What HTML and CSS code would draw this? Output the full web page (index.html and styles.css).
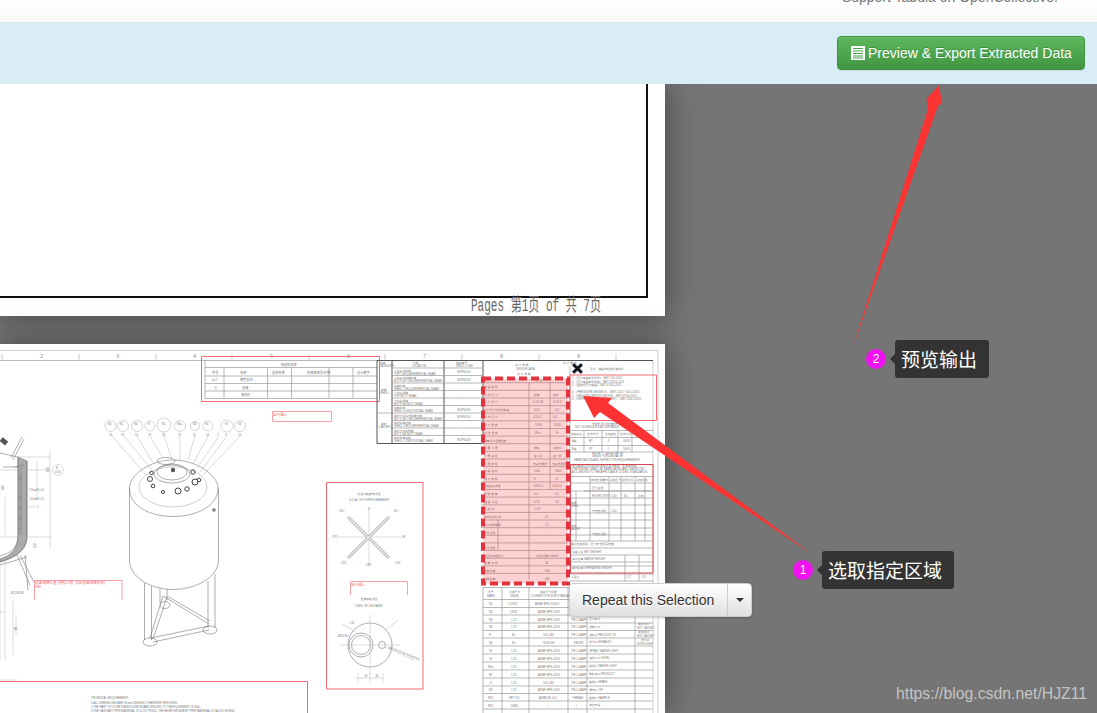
FILE: index.html
```html
<!DOCTYPE html>
<html lang="zh">
<head>
<meta charset="utf-8">
<title>Tabula</title>
<link rel="stylesheet" href="styles.css">
</head>
<body>
<div class="app">
  <nav class="nav"><span class="nav-note">Support Tabula on OpenCollective.</span></nav>
  <div class="bar">
    <button class="btn-export">
      <svg class="icon-list" viewBox="0 0 14 14"><path class="il-box" d="M0 0H14V14H0Z"/><path class="il-lines" d="M2 2.500H12M2 5H12M2 7.500H12M2 10H12M2 12H12"/></svg>
      <span>Preview &amp; Export Extracted Data</span>
    </button>
  </div>
  <main class="work">
    <section class="page page-one">
      <svg class="sheet" viewBox="0 84 665 232">
        <path class="frame-black" d="M647 84V297H-5"/>
        <text class="pages" x="471" y="311" textLength="130" lengthAdjust="spacingAndGlyphs">Pages 第1页 of 共 7页</text>
      </svg>
    </section>
    <section class="page page-two">
      <svg class="sheet" viewBox="0 344 665 369">
        <defs>
          <pattern id="hatch" width="2" height="2" patternUnits="userSpaceOnUse"><path class="hatch-line" d="M0 2L2 0M0 0L2 2"/></pattern>
        </defs>
        <!-- sheet frame -->
        <path class="lt" d="M0 350.500H658V713"/>
        <path class="md" d="M0 360.500H483"/>
        <path class="lt" d="M653 360V713M2 354V360M79 354V360M156 354V360M232 354V360M309 354V360M385 354V360M462 354V360M539 354V360M616 354V360"/>
        <g class="tx tx-num">
          <text x="40" y="358">2</text><text x="116" y="358">3</text><text x="193" y="358">4</text><text x="270" y="358">5</text><text x="347" y="358">6</text><text x="423" y="358">7</text><text x="500" y="358">8</text><text x="577" y="358">9</text>
        </g>
        <!-- top middle table -->
        <path class="md" d="M205 360.500V398.500H377M205 367.500H377M205 376H377M205 383.500H377M205 391H377M224 367.500V398.500M267.500 367.500V398.500M291.500 367.500V398.500M329 367.500V398.500M353 367.500V398.500"/>
        <g class="tx">
          <text x="281" y="366">特定检测表</text>
          <text x="212" y="373.500">序号</text><text x="240" y="373.500">名称</text><text x="272" y="373.500">是否开放</text><text x="307" y="373.500">检查单编号/日期</text><text x="357" y="373.500">设计签字</text>
          <text x="212" y="381">φ-2</text><text x="240" y="381">钢管支柱</text><text x="214" y="388.500">Ⅱ</text><text x="242" y="388.500">连接</text><text x="241" y="396">接地孔</text>
        </g>
        <path class="rd" d="M201.500 356.500H379.500V401.500H201.500Z"/>
        <path class="rd-soft" d="M272.500 411.500H331.500V421.500H272.500Z"/>
        <text class="tx-red" x="273" y="416">自行插入</text>
        <!-- weld table -->
        <path class="dk" d="M377 360.500H483V443.500H377ZM392 360.500V443.500M444 360.500V443.500"/>
        <path class="md" d="M392 368H483M392 375.500H483M392 383H483M392 390.500H483M392 398H483M392 405.500H483M392 413H483M392 420.500H483M392 428H483M392 435.500H483M377 413H392"/>
        <g class="tx tx-sm">
          <text x="380" y="364">焊条</text><text x="379" y="367">CATEGORY</text><text x="413" y="364">位置</text><text x="412" y="367">LOCATION</text><text x="456" y="364">焊接编号</text><text x="456" y="367">WELD CODE</text>
          <text x="394" y="371.500">上封头与筒体</text><text x="394" y="374.500">TOP CIRCUMFERENTIAL SEAM</text>
          <text x="394" y="379">下封头与筒体环缝</text><text x="394" y="382">BOTTOM CIRCUMFERENTIAL SEAM</text>
          <text x="394" y="386.500">筒体环缝</text><text x="394" y="389.500">SHELL CIRCUMFERENTIAL SEAM</text>
          <text x="394" y="394">上封头拼缝</text><text x="394" y="397">TOP BUTT SEAM</text>
          <text x="394" y="401.500">下封头拼缝</text><text x="394" y="404.500">BOTTOM BUTT SEAM</text>
          <text x="394" y="409">筒体纵缝</text><text x="394" y="412">SHELL LONGITUDINAL SEAM</text>
          <text x="394" y="416.500">夹套下封头与筒体环缝</text><text x="394" y="419.500">BOTTOM CIRCUMFERENTIAL SEAM</text>
          <text x="394" y="424">夹套筒体环缝</text><text x="394" y="427">SHELL CIRCUMFERENTIAL SEAM</text>
          <text x="394" y="431.500">夹套下封头拼缝</text><text x="394" y="434.500">BOTTOM BUTT SEAM</text>
          <text x="394" y="439">夹套筒体纵缝</text><text x="394" y="442">SHELL LONGITUDINAL SEAM</text>
          <text x="381" y="391">本体</text><text x="380" y="394">SHELL</text><text x="381" y="425">夹套</text><text x="379" y="428">(JACKET)</text>
          <text x="457" y="373">WDP001G</text><text x="457" y="380.500">WDP001G</text><text x="462" y="388">-</text><text x="462" y="395.500">-</text><text x="457" y="410.500">WDP001G</text><text x="457" y="418">WDP001G</text><text x="462" y="425.500">-</text><text x="462" y="433">-</text><text x="457" y="440.500">WDP002G</text>
        </g>
        <!-- right top -->
        <path class="dk" d="M483 360.500H653"/>
        <path class="md" d="M570 366V574"/>
        <g class="tx tx-sm">
          <text x="515" y="366">设 计 参 数</text>
          <text x="516" y="370">DESIGN DATA</text><text x="517" y="374.500">设 计 参 数</text>
          <text x="563" y="364">设 计 要 求</text>
          <text x="590" y="370">压力、容器与检验标准规范</text>
          <text x="572" y="379">1.《压力容器安全技术》 GB/T 150-2011</text>
          <text x="572" y="382.500">2.《压力容器制造规程》 NBT 47014-2011</text>
          <text x="572" y="386">3.《固定式压力容器》 NBT 47015-2011</text>
          <text x="572" y="393">4.《PRESSURE VESSELS》 GB/T 150.1~150.4-2011</text>
          <text x="572" y="396.500">5.《WELDING SPECIFICATION》 NBT 47014-2011</text>
          <text x="572" y="400">6.《INSPECTION OF EQUIPMENT》 NBT 47013-2015</text>
          <text x="592" y="425">无损检测比例与要求</text>
          <text x="575" y="428">NDT SCHEDULE &amp; ACCEPTANCE</text>
          <text x="592" y="456" class="tx-big">制造与检验要求</text>
          <text x="574" y="460.500">FABRICATION AND INSPECTION REQUIREMENTS</text>
          <text x="572" y="467">本设备按图纸及相关标准规范进行制造、检验和验收。</text>
          <text x="572" y="470">THE VESSEL SHALL BE FABRICATED AND INSPECTED</text>
          <text x="572" y="473">ACCORDING TO THE APPLICABLE CODES, STANDARDS.</text>
        </g>
        <path class="md" d="M570 430.500H653M570 437.500H653M570 445.500H653M570 452H653M584 430.500V452M602 430.500V452M618 430.500V452M632 430.500V452"/>
        <g class="tx tx-sm">
          <text x="571" y="435">焊接接头</text><text x="587" y="435">检测方法</text><text x="605" y="435">合格级别</text><text x="620" y="435">检测比例</text>
          <text x="572" y="442">A类</text><text x="589" y="442">RT</text><text x="607" y="442">Ⅱ</text><text x="623" y="442">100%</text>
          <text x="572" y="449.500">B类</text><text x="589" y="449.500">PT</text><text x="607" y="449.500">Ⅰ</text><text x="623" y="449.500">100%</text>
        </g>
        <path class="md" d="M570 476.500H653M570 483H653M570 491H653M570 498H653M584 491H653M570 505H653M570 513H653M570 520H653M570 528H653M570 535H653M570 541H653M570 548H653M570 555H653M570 562H653M570 566H653M570 574H653M570 581H653M590 476.500V541M576 491V541M609 476.500V541M621 476.500V541M635 476.500V541M645 476.500V541M625 555V581M639 555V581"/>
        <g class="tx tx-sm">
          <text x="591" y="481">制造检验要求</text><text x="610" y="481">试验压力</text><text x="622" y="481">保压时间</text><text x="636" y="481">合格标准</text>
          <text x="571" y="504">本体</text><text x="570" y="507">SHELL</text><text x="571" y="527">夹套</text><text x="570" y="530">JACKET</text>
          <text x="592" y="489">压力试验</text><text x="592" y="497">HYDRO TEST</text><text x="611" y="497">1.00</text><text x="624" y="497">30</text><text x="638" y="497">合格</text>
          <text x="592" y="512">气密性试验</text><text x="611" y="512">1.00</text><text x="592" y="535">气密性试验</text>
          <text x="571" y="545">其它检验项目：压力表·安全阀检查</text>
          <text x="572" y="553">设备净重 NET WEIGHT</text><text x="572" y="560">满水重量 WATER WEIGHT</text><text x="572" y="569">操作重量 OPERATING WEIGHT</text>
          <text x="571" y="578">净重比</text><text x="627" y="578">1.2</text><text x="642" y="578">6.5</text>
        </g>
        <path class="rd" d="M570 375H656.500V420.500H570Z"/>
        <path class="rd-strong" d="M570.500 464.500H653V573H570.500Z"/>
        <!-- selected table lines under overlay -->
        <path class="md" d="M481 382.700H570M481 390.300H570M481 398H570M481 405.600H570M481 413.200H570M481 420.900H570M481 428.500H570M481 436.100H570M481 443.700H570M481 451.400H570M481 459H570M481 466.600H570M481 474.300H570M481 481.900H570M481 489.500H570M481 497.100H570M481 504.800H570M481 512.400H570M481 520H570M481 527.700H570M481 535.300H570M481 542.900H570M481 550.500H570M481 558.200H570M481 565.800H570M481 573.400H570M529 382V580M550 382V490M498 520V550"/>
        <g class="tx tx-sm">
          <text x="536" y="382">介 质</text><text x="484" y="388">容 器 类 别</text><text x="484" y="396">工 作 压 力</text><text x="484" y="403">设 计 压 力</text><text x="484" y="411">设计压力及危险等级</text><text x="484" y="418">工 作 压 力</text><text x="484" y="426">设 计 温 度</text><text x="484" y="434">工 作 温 度</text><text x="484" y="441.500">最高设计金属温度</text><text x="484" y="449">主 要 介 质</text><text x="484" y="457">介 质 类 别</text><text x="484" y="465">介 质 特 性</text><text x="484" y="472">容 器 容 积</text><text x="484" y="480">设 计 寿 命</text><text x="484" y="487">焊接接头系数</text><text x="484" y="495">腐 蚀 裕 量</text><text x="484" y="503">容 器 净 重</text><text x="484" y="510">全 容 积</text><text x="484" y="518">射线检测比例</text><text x="484" y="526">设计使用年限</text><text x="484" y="534">耐压试验</text><text x="484" y="549">水压试验</text><text x="484" y="557">安全阀开启压力</text><text x="484" y="564">最 高 许 用</text><text x="484" y="572">空载重量</text><text x="484" y="580">满载重量</text>
          <text x="534" y="396">筒体</text><text x="553" y="396">夹套</text><text x="532" y="403">-0.1/0.28</text><text x="552" y="403">-0.1/0.3</text><text x="534" y="411">0.25</text><text x="555" y="411">0.3</text><text x="532" y="418">-0.1/0.2</text><text x="553" y="418">0.4</text><text x="534" y="426">-5/150</text><text x="553" y="426">-5/150</text><text x="535" y="434">85℃</text><text x="555" y="434">7℃</text><text x="534" y="449">物料</text><text x="553" y="449">冷却水</text><text x="534" y="457">第二组</text><text x="553" y="457">第一组</text><text x="533" y="465">无毒无易燃</text><text x="552" y="465">无毒无易燃</text><text x="534" y="472">1000</text><text x="555" y="472">1000</text><text x="534" y="480">8</text><text x="556" y="480">8</text><text x="533" y="487">0.85/1.0</text><text x="552" y="487">0.85/1.0</text><text x="534" y="495">0.4</text><text x="555" y="495">0.1</text><text x="534" y="503">0.76</text><text x="555" y="503">1.0</text><text x="535" y="510">0.25</text><text x="545" y="518">10</text><text x="545" y="526">2.1</text><text x="545" y="534">-</text><text x="538" y="549">-</text><text x="536" y="557">低压水循环 30min</text><text x="545" y="564">30</text><text x="545" y="572">900</text><text x="545" y="580">435</text>
        </g>
        <rect class="selection" x="483" y="378.500" width="85" height="205"/>
        <!-- nozzle table -->
        <path class="md" d="M483 587.500H653M483 599.500H653M483 607.500H653M483 615H653M483 623H653M483 630.500H653M483 638H653M483 646H653M483 654H653M483 662H653M483 670H653M483 678H653M483 686H653M483 693.500H653M483 701H653M483 709H653M483 587.500V713M502 587.500V713M529 587.500V713M568 587.500V713M587 587.500V713M635 587.500V713"/>
        <g class="tx tx-sm">
          <text x="488" y="593">序号</text><text x="487" y="596.500">MARK</text><text x="509" y="593">公称尺寸</text><text x="510" y="596.500">DN(IN)</text><text x="540" y="593">连接尺寸标准</text><text x="531" y="596.500">CONNECTION SIZE STANDARD</text>
          <text x="489" y="605">N1</text><text x="508" y="605">1.25/65</text><text x="535" y="605">ASME BPE-2019/Ti</text>
          <text x="489" y="612.500">N2</text><text x="510" y="612.500">13/26</text><text x="538" y="612.500">ASME BPE-2019</text>
          <text x="489" y="620.500">N3</text><text x="511" y="620.500">1.25</text><text x="538" y="620.500">ASME BPE-2019</text><text x="571" y="620.500">TRI-CLAMP</text>
          <text x="489" y="628">N5</text><text x="511" y="628">1.25</text><text x="538" y="628">ASME BPE-2019</text><text x="571" y="628">TRI-CLAMP</text>
          <text x="489" y="635.500">E</text><text x="512" y="635.500">65</text><text x="543" y="635.500">150 LBS</text><text x="571" y="635.500">TRI-CLAMP</text>
          <text x="489" y="643.500">N2</text><text x="512" y="643.500">90</text><text x="543" y="643.500">SCH 10S</text><text x="574" y="643.500">FRONT</text>
          <text x="489" y="651.500">S1</text><text x="511" y="651.500">1.25</text><text x="538" y="651.500">ASME BPE-2019</text><text x="571" y="651.500">TRI-CLAMP</text>
          <text x="489" y="659.500">S2</text><text x="511" y="659.500">1.25</text><text x="538" y="659.500">ASME BPE-2019</text><text x="571" y="659.500">TRI-CLAMP</text>
          <text x="488" y="667.500">N3a</text><text x="511" y="667.500">2.25</text><text x="538" y="667.500">ASME BPE-2019</text><text x="571" y="667.500">TRI-CLAMP</text>
          <text x="489" y="675.500">H7</text><text x="511" y="675.500">1.25</text><text x="538" y="675.500">ASME BPE-2019</text><text x="571" y="675.500">TRI-CLAMP</text>
          <text x="489" y="683.500">J1</text><text x="511" y="683.500">1.25</text><text x="543" y="683.500">150 LBS</text><text x="571" y="683.500">TRI-CLAMP</text>
          <text x="489" y="691">N2</text><text x="511" y="691">1.25</text><text x="538" y="691">ASME BPE-2019</text><text x="571" y="691">TRI-CLAMP</text>
          <text x="488" y="698.500">R10</text><text x="509" y="698.500">NPT 1/2</text><text x="539" y="698.500">ASME B1.20.1</text><text x="572" y="698.500">THREAD</text>
          <text x="488" y="706.500">R16</text><text x="511" y="706.500">DN65</text><text x="547" y="706.500">/</text><text x="576" y="706.500">/</text>
          <text x="589" y="620">压力表口</text><text x="589" y="628">温度计口</text><text x="589" y="635.500">进料口 PRODUCT IN</text><text x="589" y="643">排气口 EXHAUST</text><text x="589" y="651.500">SPRAY, WATER LIGHT</text><text x="589" y="659">液位计口 LEVEL</text><text x="589" y="667">视镜灯 WATER LIGHT</text><text x="589" y="675">物料进口 PRODUCT</text><text x="589" y="683">备用口 SPARE</text><text x="589" y="691">清洗口 CIP</text><text x="589" y="698.500">取样口 SAMPLE</text><text x="589" y="706">液位开关</text>
          <text x="638" y="625">夹套出口</text><text x="637" y="628.500">HOT JACKET</text><text x="638" y="633">夹套进口</text><text x="637" y="636.500">HOT JACKET</text><text x="641" y="641">排污口</text><text x="637" y="644.500">WITH LIGHT</text>
        </g>
        <!-- tank -->
        <path class="dr" d="M129.500 488C129.500 475 150 460 173 460C196 460 218 475 218 488C218 507 195 516.500 173 516.500C151 516.500 129.500 507 129.500 488ZM129.500 488V560C129.500 577 150 589.500 173 589.500C196 589.500 218.500 577 218.500 560V488"/>
        <ellipse class="lt" cx="173" cy="487" rx="34" ry="20"/>
        <ellipse class="dr" cx="166" cy="461" rx="9" ry="3.500"/>
        <ellipse class="dr" cx="172" cy="472" rx="15" ry="8"/>
        <ellipse class="dr" cx="172" cy="474" rx="18" ry="9"/>
        <circle class="dk-fill" cx="173" cy="470" r="2.200"/>
        <g class="nozzles">
          <circle cx="151.500" cy="473" r="1.800"/><circle cx="150" cy="479" r="2.500"/><circle cx="153" cy="486" r="1.800"/><circle cx="163" cy="492" r="1.600"/><circle cx="178" cy="491" r="3"/><circle cx="187" cy="489" r="2.200"/><circle cx="195" cy="482" r="3"/><circle cx="193" cy="472" r="2.200"/><circle cx="199" cy="480" r="1.800"/><circle cx="214" cy="510" r="1.200"/>
        </g>
        <path class="lt-dr" d="M112 436L146 475M124 436L152 470M137 436L153 463M150 436L163 458M164 436L172 459M180 436L180 460M195 436L188 460M208 436L193 464M219 436L197 468M227 436L200 472M240 436L204 474"/>
        <g class="balloons">
          <circle cx="110.500" cy="426" r="5.500"/><circle cx="123" cy="426" r="5.500"/><circle cx="137" cy="426" r="5.500"/><circle cx="150" cy="426" r="5"/><circle cx="164" cy="425" r="7"/><circle cx="180" cy="426" r="5.500"/><circle cx="195" cy="426" r="4.500"/><circle cx="208" cy="426" r="5"/><circle cx="227" cy="426" r="6"/><circle cx="240" cy="426" r="5.500"/>
        </g>
        <g class="tx tx-sm">
          <text x="108" y="425">N1</text><text x="120" y="425">K1</text><text x="134" y="425">N4</text><text x="148" y="425">E</text><text x="162" y="425">K1</text><text x="177" y="425">K6a</text><text x="193" y="425">N2</text><text x="205" y="425">K4</text><text x="225" y="425">K7</text><text x="238" y="425">K3</text>
          <text x="109" y="436">13</text><text x="121" y="436">18</text><text x="135" y="436">10</text><text x="148" y="436">13</text><text x="162" y="436">19</text><text x="178" y="436">17</text><text x="193" y="436">11</text><text x="206" y="436">16</text><text x="217" y="436">7</text><text x="225" y="436">9</text><text x="238" y="436">13</text>
        </g>
        <!-- legs -->
        <path class="dr" d="M144.500 583V640M151.500 586V640M208 581V628M215 574V628M160 589V603M167 589V600M163 596L209 624M167 596L210 621M163 596L150 638M167 597L153 639M151 638L209 626M153 642L209 630"/>
        <ellipse class="dr" cx="150" cy="642" rx="7" ry="4"/>
        <ellipse class="dr" cx="210" cy="630" rx="7" ry="4"/>
        <ellipse class="dr" cx="165" cy="605" rx="5" ry="3.500"/>
        <!-- section -->
        <path class="section-fill" d="M18 457L27 461V535C27 548 20 556 0 562V559C12 555 18 548 18 535Z"/>
        <path class="dr" d="M18 457V535C18 545 14 552 0 556M27 461V535C27 548 20 556 0 562M0 565L27 557M18 457L0 453M21 467V535M3 467H18M18 478H21M18 488H21M18 498H21M18 508H21M18 518H21M18 528H21"/>
        <path class="lt-dr" d="M0 470H50M5 497V535M0 537H52M20 457H50M37 462V500M50 450V548M27 507H36M0 560V660M5 560V660M0 680H17M0 612H5M13 600V655M16 615V635"/>
        <path class="dr" d="M11 458L22 437M13 460L24 439M15 467L24 465M17 555L30 585M20 555L34 582M25 555L28 590"/>
        <circle class="lt-dr" cx="58" cy="470" r="5.500"/>
        <rect class="dk-fill" x="0" y="439" width="7" height="5" transform="rotate(40 4 442)"/>
        <g class="tx tx-sm">
          <text x="30" y="491">8 hairS.L.D</text><text x="30" y="500">8 hairS.L.D</text><text x="56" y="469">B</text><text x="55" y="472.500">1:50</text><text x="11" y="594">ØC230.80</text><text x="37" y="508">1</text>
          <text transform="translate(49 472) rotate(-90)">100</text><text transform="translate(36 548) rotate(-90)">150</text><text transform="translate(4 490) rotate(-90)">600</text><text transform="translate(17 630) rotate(-90)">80</text>
        </g>
        <path class="rd-soft" d="M34.500 600V580.500H122V600"/>
        <text class="tx-red" x="35" y="584">设备铭牌位置 (参照工程, 详见设备铭牌规范)</text>
        <text class="tx-red" x="35" y="587.500">GM</text>
        <!-- detail box -->
        <path class="rd" d="M326.500 482.500H423V689H326.500Z"/>
        <g class="tx tx-sm tx-center">
          <text x="369" y="495">防涡流板安装详图</text><text x="369" y="500.500">D.O.A. OF VORTEX BREAKER</text>
          <text x="369" y="600">支腿底板详图</text><text x="369" y="606.500">DWG. OF LEG BASE</text>
          <text x="369" y="510">0°</text><text x="396" y="512">45°</text><text x="404" y="538">90°</text><text x="398" y="564">135°</text><text x="369" y="566">180°</text><text x="344" y="564">225°</text><text x="335" y="538">270°</text><text x="342" y="512">315°</text>
          <text x="352" y="624">L35</text><text x="343" y="637">Ø230.90</text><text x="366" y="677">35</text><text x="377" y="677">40</text>
        </g>
        <path class="lt-dr" d="M369 507V565M338 537H401"/>
        <path class="arm" d="M348 517L389 558M389 517L348 558"/>
        <path class="arm-in" d="M348 517L389 558M389 517L348 558"/>
        <path class="rd-soft" d="M350.500 595V581.500H407.500V595"/>
        <text class="tx-red" x="351" y="586">自行插入</text>
        <circle class="dr" cx="370" cy="645" r="22"/>
        <circle class="dr" cx="361" cy="645" r="12"/>
        <circle class="dr" cx="361" cy="645" r="9.500"/>
        <circle class="dr" cx="382" cy="645" r="3.500"/>
        <path class="lt-dr" d="M370 615V675M340 645H400M358 673V683M370 673V683M383 673V683M355 678H383M342 624L356 632M385 631L398 620M385 647L414 660"/>
        <text class="tx tx-rot" transform="translate(388 648) rotate(22)">WELD STUD M16/M16</text>
        <!-- requirement box -->
        <path class="rd" d="M0 681.500H307.500V713"/>
        <g class="tx tx-sm">
          <text x="91" y="699">TECHNICAL REQUIREMENT:</text>
          <text x="91" y="703.500">1.ALL DIMENSIONS ARE IN mm UNLESS OTHERWISE SPECIFIED.</text>
          <text x="91" y="707.500">2.THE PART OF COMPONENTS WHICH ARE WELDED TO THE EQUIPMENT IS 904L.</text>
          <text x="91" y="711.500">3.THE SANITARY PIPE MATERIAL IS S-270 TP316L,THE REINFORCEMENT PIPE MATERIAL IS SA-312 N08904,</text>
        </g>
      </svg>
    </section>
  </main>

  <svg class="close-x" viewBox="0 0 12 12"><path class="x-halo" d="M2 2L10 10M10 2L2 10"/><path class="x-stroke" d="M2 2L10 10M10 2L2 10"/></svg>

  <div class="repeat">
    <button class="repeat-main">Repeat this Selection</button>
    <button class="repeat-caret"><span class="caret"></span></button>
  </div>

  <svg class="arrows" viewBox="0 0 1097 713">
    <path class="arrow" d="M813 555L608 403L612 398L583 396L594 418L600 412Z"/>
    <path class="arrow" d="M853 347L928 109L926.500 99L939 85.500L942 103L938 106Z"/>
  </svg>

  <div class="marker marker-one">1</div>
  <div class="tip tip-one">选取指定区域</div>
  <div class="marker marker-two">2</div>
  <div class="tip tip-two">预览输出</div>

  <div class="watermark">https://blog.csdn.net/HJZ11</div>
</div>
</body>
</html>
```
FILE: styles.css
```css
* { box-sizing: border-box; }
html, body { margin: 0; height: 100%; overflow: hidden; }
body { font-family: "Liberation Sans", Arial, sans-serif; font-size: 14px; color: #333; }

.app { position: relative; width: 1097px; height: 713px; display: flex; flex-direction: column; overflow: hidden; background: #757575; }

.nav { height: 23px; flex: none; display: flex; justify-content: flex-end; align-items: flex-end; padding: 0 39px 15px 0; overflow: hidden; background: linear-gradient(#ffffff, #f8f8f8); border-bottom: 1px solid #e4e4e4; position: relative; z-index: 2; box-shadow: 0 1px 2px rgba(0,0,0,.05); }
.nav-note { color: #777; font-size: 14px; line-height: 20px; white-space: nowrap; flex: none; }

.bar { height: 61px; flex: none; display: flex; justify-content: flex-end; align-items: flex-start; padding: 13px 12px 0 0; background: #d9edf7; position: relative; z-index: 2; }
.btn-export { display: flex; align-items: center; gap: 3px; height: 34px; width: 248px; padding: 0 0 0 13px; font: 14px/20px "Liberation Sans", Arial, sans-serif; color: #fff; text-shadow: 0 -1px 0 rgba(0,0,0,.2); background: linear-gradient(#5cb85c, #419641); border: 1px solid #3e8f3e; border-radius: 4px; box-shadow: inset 0 1px 0 rgba(255,255,255,.15), 0 1px 1px rgba(0,0,0,.075); }
.icon-list { width: 14px; height: 14px; flex: none; }
.il-box { fill: #fff; }
.il-lines { stroke: #4aa04a; stroke-width: 1; fill: none; }

.work { flex: 1; display: flex; flex-direction: column; gap: 28px; overflow: hidden; min-height: 0; }
.page { width: 665px; flex: none; background: #fff; box-shadow: 0 0 30px rgba(0,0,0,.42); position: relative; }
.page-one { height: 232px; }
.page-two { height: 369px; }
.sheet { display: block; width: 665px; height: 100%; }

.sheet path, .sheet circle, .sheet ellipse, .sheet rect { fill: none; }
.frame-black { stroke: #111; stroke-width: 2; }
.pages { font-family: "Liberation Mono", "Noto Sans CJK SC", monospace; font-size: 18px; fill: #666; }
.lt { stroke: #cfcfcf; stroke-width: 1; }
.md { stroke: #9a9a9a; stroke-width: .7; }
.dk { stroke: #555; stroke-width: 1; }
.dr { stroke: #777; stroke-width: .6; }
.lt-dr { stroke: #b5b5b5; stroke-width: .5; }
.rd { stroke: #f46a72; stroke-width: 1; }
.rd-strong { stroke: #d9434b; stroke-width: 1; }
.rd-soft { stroke: #f9a0a6; stroke-width: 1; }
.hatch-line { stroke: #555; stroke-width: .5; }
.sheet .section-fill { fill: url(#hatch); stroke: #666; stroke-width: .5; }
.sheet .dk-fill { fill: #555; }
.nozzles circle { stroke: #444; stroke-width: 1; }
.balloons circle { stroke: #aaa; stroke-width: .5; }
.tx text, text.tx { font-family: "Liberation Sans", "Noto Sans CJK SC", sans-serif; font-size: 3.2px; fill: #777; }
.tx-sm text { font-size: 2.800px; }
.tx-num text { font-size: 6px; fill: #888; font-family: "Liberation Serif", serif; }
.tx text.tx-big { font-size: 4.500px; }
.tx-center text { text-anchor: middle; }
.tx-red { font-family: "Liberation Sans", "Noto Sans CJK SC", sans-serif; font-size: 3.600px; fill: #f0626a; }
.selection { stroke: #e2333f; stroke-width: 4; stroke-dasharray: 8 4; }
.sheet rect.selection { fill: rgba(245, 60, 60, .23); }
.arm { stroke: #aaa; stroke-width: 3; }
.arm-in { stroke: #eee; stroke-width: 1.400; }

.close-x { position: absolute; left: 571px; top: 362px; width: 13px; height: 13px; z-index: 3; }
.x-halo { fill: none; stroke: #8fb4d8; stroke-width: 4; opacity: .5; }
.x-stroke { fill: none; stroke: #111; stroke-width: 2.600; }

.repeat { position: absolute; left: 569px; top: 583px; width: 183px; height: 34px; display: flex; z-index: 3; border-radius: 4px; box-shadow: 0 1px 2px rgba(0,0,0,.2); }
.repeat button { height: 34px; font: 14px/20px "Liberation Sans", Arial, sans-serif; color: #333; background: linear-gradient(#fff, #e0e0e0); border: 1px solid #ccc; text-shadow: 0 1px 0 #fff; padding: 0; }
.repeat .repeat-main { width: 159px; border-radius: 4px 0 0 4px; padding-left: 12px; text-align: left; }
.repeat .repeat-caret { width: 24px; margin-left: -1px; flex: 1; border-radius: 0 4px 4px 0; display: flex; align-items: center; justify-content: center; }
.caret { width: 0; height: 0; border-left: 4px solid transparent; border-right: 4px solid transparent; border-top: 4px solid #333; }

.arrows { position: absolute; left: 0; top: 0; width: 1097px; height: 713px; z-index: 4; pointer-events: none; }
.arrow { fill: #fb3333; }

.marker { position: absolute; width: 20px; height: 20px; border-radius: 50%; background: #f012f0; color: #fff; font-size: 12px; line-height: 20px; text-align: center; z-index: 5; }
.marker-one { left: 793px; top: 560px; }
.marker-two { left: 866px; top: 349px; }
.tip { position: absolute; height: 38px; background: #333; color: #fff; border-radius: 3px; font: 19px/38px "Noto Sans CJK SC", "Liberation Sans", sans-serif; padding-left: 6px; z-index: 5; }
.tip::before { content: ""; position: absolute; left: -5px; top: 14px; border-top: 5px solid transparent; border-bottom: 5px solid transparent; border-right: 5px solid #333; }
.tip-one { left: 822px; top: 551px; width: 132px; }
.tip-two { left: 895px; top: 340px; width: 94px; }

.watermark { position: absolute; left: 896px; top: 684px; font-size: 15.800px; line-height: 20px; color: #c4c4c4; white-space: nowrap; z-index: 5; }
```
